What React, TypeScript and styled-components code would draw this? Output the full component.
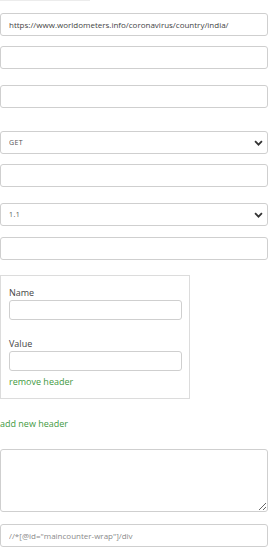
import styled, { createGlobalStyle } from "styled-components";

const GlobalStyle = createGlobalStyle`
  body {
    margin: 0;
    background: #fff;
    font-family: "Open Sans", "Liberation Sans", sans-serif;
    color: #333;
  }
`;

const Page = styled.div`
  width: 268px;
  display: flex;
  flex-direction: column;
`;

const TopRule = styled.div`
  width: 90px;
  height: 1px;
  background: #ececec;
`;

const Field = styled.div<{ $top: number }>`
  margin-top: ${(p) => p.$top}px;
  position: relative;
`;

const Input = styled.input`
  box-sizing: border-box;
  display: block;
  width: 100%;
  height: 23px;
  padding: 0 8px;
  border: 1px solid #cfcfcf;
  border-radius: 3px;
  background: #fff;
  font-family: "Open Sans", "Liberation Sans", sans-serif;
  font-size: 8px;
  color: #444;
  outline: none;
  &::placeholder {
    color: #8a8a8a;
  }
`;

const Select = styled.select`
  box-sizing: border-box;
  display: block;
  width: 100%;
  height: 23px;
  padding: 0 8px;
  border: 1px solid #cfcfcf;
  border-radius: 3px;
  background: #fff;
  appearance: none;
  font-family: "Open Sans", "Liberation Sans", sans-serif;
  font-size: 7px;
  letter-spacing: 0.4px;
  color: #555;
  outline: none;
`;

const Chevron = styled.svg`
  position: absolute;
  right: 5px;
  top: 8px;
  width: 9px;
  height: 8px;
  pointer-events: none;
`;

const HeaderBox = styled.div`
  margin-top: 15px;
  width: 190px;
  height: 124px;
  box-sizing: border-box;
  border: 1px solid #dcdcdc;
  padding: 8px 7px 0 8px;
  display: flex;
  flex-direction: column;
`;

const Label = styled.label<{ $top: number }>`
  margin-top: ${(p) => p.$top}px;
  font-size: 9px;
  line-height: 12px;
  color: #444;
  margin-bottom: 1px;
`;

const SmallInput = styled(Input)`
  height: 20px;
`;

const Link = styled.a<{ $top: number }>`
  margin-top: ${(p) => p.$top}px;
  font-size: 9px;
  line-height: 12px;
  color: #3f9a3f;
  text-decoration: none;
  cursor: pointer;
`;

const TextArea = styled.textarea`
  box-sizing: border-box;
  display: block;
  width: 100%;
  height: 63px;
  margin-top: 19px;
  border: 1px solid #cfcfcf;
  border-radius: 3px;
  resize: vertical;
  font-family: "Open Sans", "Liberation Sans", sans-serif;
  font-size: 8px;
  outline: none;
`;

function SelectField({ top, value, options }: { top: number; value: string; options: string[] }) {
  return (
    <Field $top={top}>
      <Select defaultValue={value}>
        {options.map((o) => (
          <option key={o}>{o}</option>
        ))}
      </Select>
      <Chevron viewBox="0 0 10 8">
        <path d="M1.2 2 L5 5.8 L8.8 2" fill="none" stroke="#333" strokeWidth="2" />
      </Chevron>
    </Field>
  );
}

export default function App() {
  return (
    <Page>
      <GlobalStyle />
      <TopRule />
      <Field $top={12}>
        <Input defaultValue="https://www.worldometers.info/coronavirus/country/india/" />
      </Field>
      <Field $top={10}>
        <Input />
      </Field>
      <Field $top={16}>
        <Input />
      </Field>
      <SelectField top={23} value="GET" options={["GET", "POST", "PUT", "DELETE"]} />
      <Field $top={10}>
        <Input />
      </Field>
      <SelectField top={16} value="1.1" options={["1.0", "1.1", "2"]} />
      <Field $top={11}>
        <Input />
      </Field>
      <HeaderBox>
        <Label $top={3}>Name</Label>
        <SmallInput />
        <Label $top={18}>Value</Label>
        <SmallInput />
        <Link $top={5}>remove header</Link>
      </HeaderBox>
      <Link $top={19}>add new header</Link>
      <TextArea />
      <Field $top={12}>
        <Input placeholder={'//*[@id="maincounter-wrap"]/div'} />
      </Field>
    </Page>
  );
}
